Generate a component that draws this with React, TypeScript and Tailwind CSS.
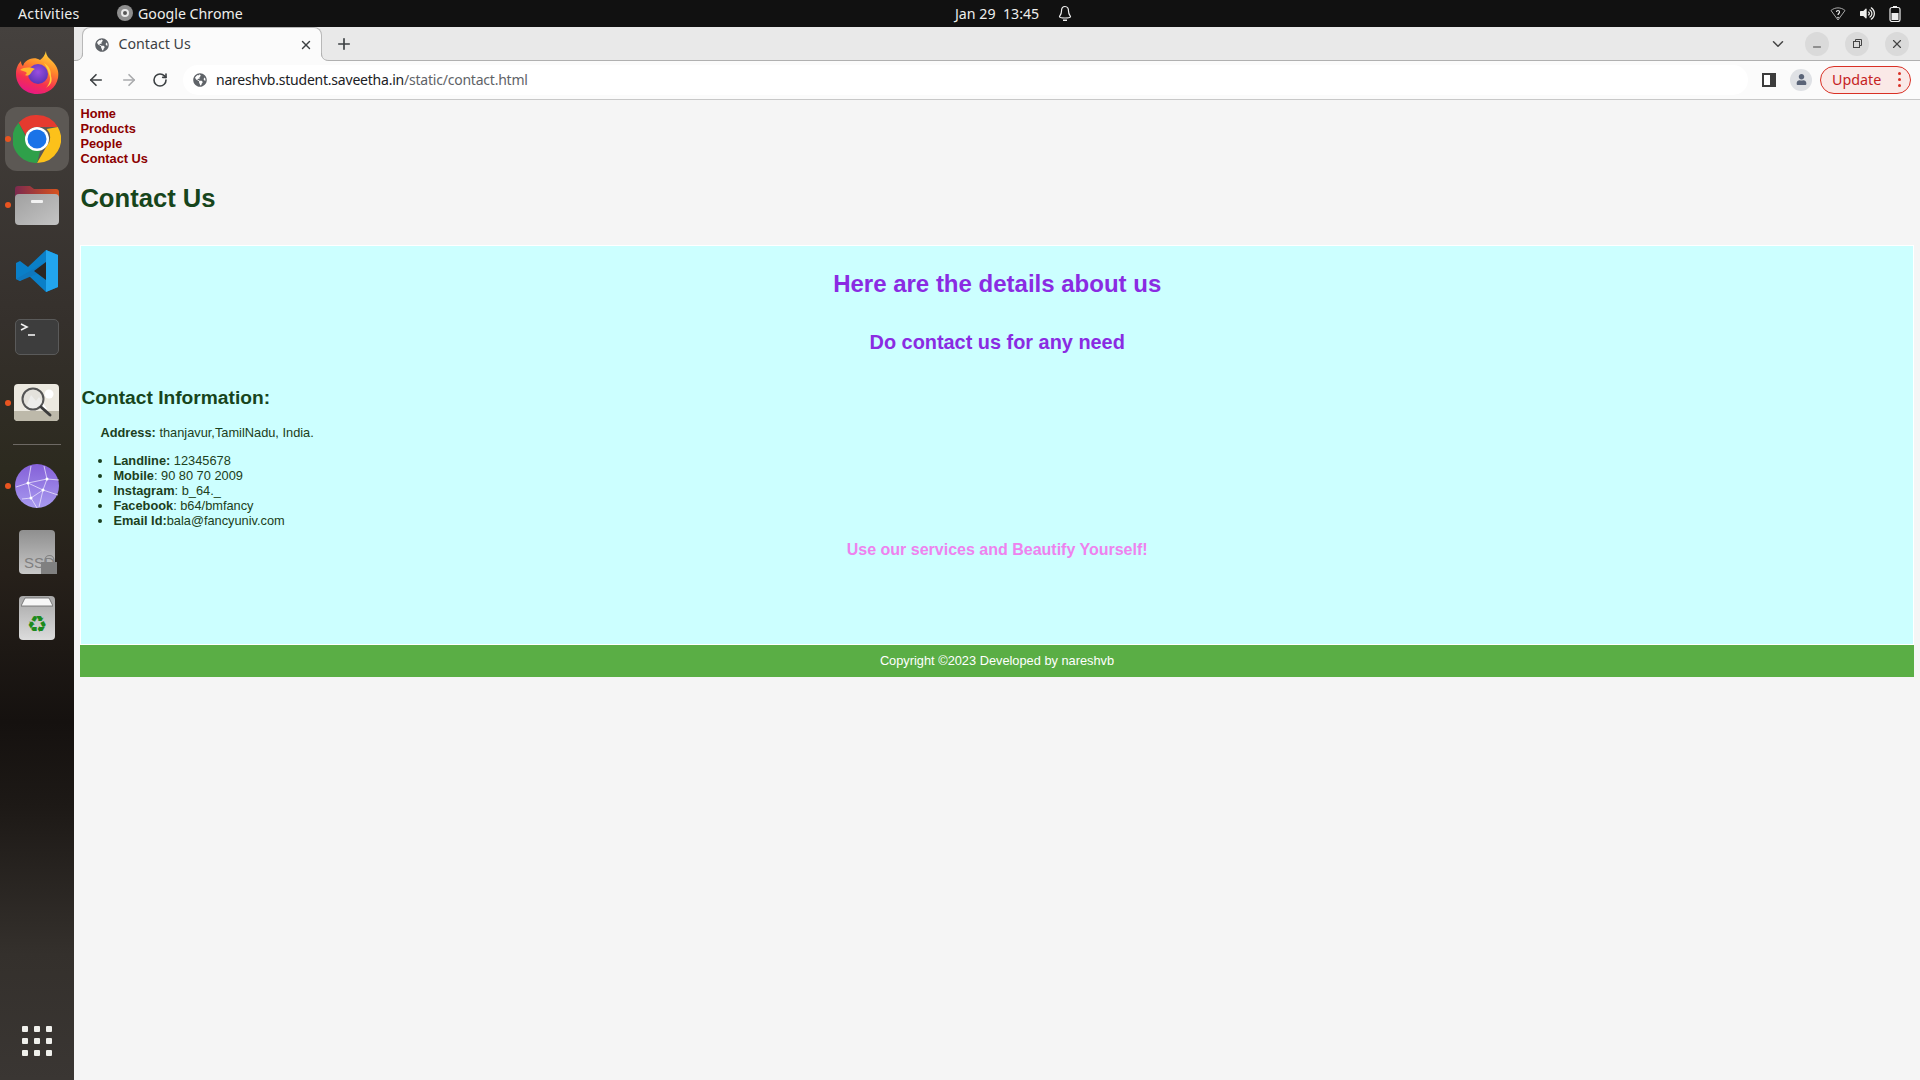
import { ArrowLeft, ArrowRight, ChevronDown, Minus, Plus, RotateCw, X } from "lucide-react";
import { FaGlobeAmericas, FaUser, FaVolumeUp } from "react-icons/fa";

const UI_FONT = "font-['Noto_Sans',sans-serif]";

function FirefoxIcon() {
  return (
    <svg width="44" height="44" viewBox="0 0 44 44">
      <defs>
        <linearGradient id="ffBody" x1="0.7" y1="0" x2="0.3" y2="1">
          <stop offset="0" stopColor="#ffd53a" />
          <stop offset="0.35" stopColor="#ff8a2a" />
          <stop offset="0.7" stopColor="#f5304f" />
          <stop offset="1" stopColor="#e6168a" />
        </linearGradient>
        <radialGradient id="ffGlobe" cx="0.5" cy="0.4" r="0.6">
          <stop offset="0" stopColor="#9a4ee0" />
          <stop offset="1" stopColor="#5b35b5" />
        </radialGradient>
      </defs>
      <path d="M31 0c0 5 3 7 7 11 5 5 6 11 5 16-2 10-10 16-21 16C10 43 1 34 1 23c0-6 2-10 5-13 0 3 1 4 2 5 1-4 4-6 7-7 3-1 7-1 10 1 3-2 5-5 6-9z" fill="url(#ffBody)" />
      <circle cx="23" cy="23" r="10" fill="url(#ffGlobe)" />
      <path d="M5 19c4-3 10-3 15-1-2 1-3 2-4 4-2 3-4 3-6 2 2-1 2-2 1-3-2-1-4-1-6-2z" fill="#ffb52e" />
      <path d="M29 12c5 3 7 7 7 13 2 6-1 9-5 12 4-5 5-9 3-14-1-4-3-8-5-11z" fill="#ffcf3a" />
    </svg>
  );
}

function ChromeIcon() {
  return (
    <svg width="48" height="48" viewBox="0 0 48 48">
      <path d="M24 0a24 24 0 0 1 20.800 12H24a12 12 0 0 0-11.300 8L5.600 7.800A24 24 0 0 1 24 0z" fill="#e53a2f" />
      <path d="M44.800 12A24 24 0 0 1 24 48l10.400-18A12 12 0 0 0 33.800 14z" fill="#fcc11a" />
      <path d="M24 48A24 24 0 0 1 5.600 7.800L14 24a11 11 0 0 0 14 9l-4 15z" fill="#2fa04a" />
      <circle cx="24" cy="24" r="12" fill="#fff" />
      <circle cx="24" cy="24" r="9.500" fill="#1a73e8" />
    </svg>
  );
}

function FolderIcon() {
  return (
    <svg width="44" height="40" viewBox="0 0 44 40">
      <defs>
        <linearGradient id="fdTop" x1="0" y1="0" x2="1" y2="0">
          <stop offset="0" stopColor="#7b2a4f" />
          <stop offset="1" stopColor="#d9531e" />
        </linearGradient>
        <linearGradient id="fdBody" x1="0" y1="0" x2="1" y2="1">
          <stop offset="0" stopColor="#a0a0a0" />
          <stop offset="1" stopColor="#c4c4c4" />
        </linearGradient>
      </defs>
      <path d="M0 4a3 3 0 0 1 3-3h12l4 3h22a3 3 0 0 1 3 3v9H0z" fill="url(#fdTop)" />
      <rect x="0" y="9" width="44" height="31" rx="4" fill="url(#fdBody)" />
      <rect x="16" y="15" width="12" height="3" rx="1" fill="#f2f2f2" />
    </svg>
  );
}

function VscodeIcon() {
  return (
    <svg width="44" height="44" viewBox="0 0 44 44">
      <path d="M31 1L13 18 5 12 1 14v16l4 2 8-6 18 17 12-5V6z" fill="#0a7fc8" />
      <path d="M31 1l12 5v32l-12 5z" fill="#22a5ee" />
      <path d="M1 30l30-17v8L5 32z" fill="#0f77bd" />
      <path d="M31 13v18L19 22z" fill="#2a2623" />
    </svg>
  );
}

function TerminalIcon() {
  return (
    <div className="relative h-9 w-11 rounded-[5px] border border-[#5a5a5a] bg-[#3d3d3d]">
      <svg width="44" height="36" viewBox="0 0 44 36" className="absolute -left-px -top-px">
        <path d="M6 5l6 3-6 3" fill="none" stroke="#f2f2f2" strokeWidth="1.600" />
        <path d="M13 16h7" stroke="#f2f2f2" strokeWidth="1.600" />
      </svg>
    </div>
  );
}

function SearchIcon() {
  return (
    <svg width="46" height="38" viewBox="0 0 46 38">
      <rect width="45" height="37" rx="4" fill="#ece9e0" />
      <path d="M0 27h45v6a4 4 0 0 1-4 4H4a4 4 0 0 1-4-4z" fill="#bdb9aa" />
      <path d="M11 25l6-14 5 6 3-4 8 12z" fill="#fff" />
      <circle cx="35" cy="10" r="4.500" fill="#fff" />
      <circle cx="19" cy="15" r="10.500" fill="#dcdcd8" fillOpacity="0.500" stroke="#555" strokeWidth="2" />
      <path d="M27 23l9 8" stroke="#3c3c3c" strokeWidth="3" strokeLinecap="round" />
    </svg>
  );
}

function NetworkGlobeIcon() {
  return (
    <svg width="44" height="44" viewBox="0 0 44 44">
      <defs>
        <linearGradient id="nwBg" x1="0" y1="0" x2="0" y2="1">
          <stop offset="0" stopColor="#8460d8" />
          <stop offset="1" stopColor="#a89af0" />
        </linearGradient>
      </defs>
      <circle cx="22" cy="22" r="22" fill="url(#nwBg)" />
      <g fill="none" stroke="#e8e2fb" strokeWidth="0.800">
        <path d="M1 23l12-4 19-4 12 1" />
        <path d="M13 19l15 7 15 5" />
        <path d="M28 26l-12 8-9 1" />
        <path d="M13 19l3 15 6 10" />
        <path d="M32 15l-4 11-4 17" />
        <path d="M13 19l3-17M32 15l-3-13" />
      </g>
      <g fill="#fff">
        <circle cx="13" cy="19" r="1.500" />
        <circle cx="32" cy="15" r="1.500" />
        <circle cx="28" cy="26" r="1.500" />
        <circle cx="16" cy="34" r="1.500" />
      </g>
    </svg>
  );
}

function SsdIcon() {
  return (
    <div className="relative h-11 w-9 rounded-[4px] bg-gradient-to-b from-[#8f8f8f] to-[#c8c8c8]">
      <span className="absolute left-[5px] top-[24px] font-['Liberation_Sans',sans-serif] text-[15px] leading-[18px] text-[#808080]">SSD</span>
      <svg width="16" height="20" viewBox="0 0 16 20" className="absolute -right-[2px] bottom-0">
        <path d="M4 9V6a4.500 4.500 0 0 1 9 0v3" fill="none" stroke="#808080" strokeWidth="1.200" />
        <rect x="0" y="8" width="16" height="12" fill="#808080" />
      </svg>
    </div>
  );
}

function TrashIcon() {
  return (
    <div className="relative flex h-11 w-9 items-end justify-center rounded-[4px] bg-gradient-to-b from-[#a8a8a8] to-[#dcdcdc]">
      <svg width="32" height="10" viewBox="0 0 32 10" className="absolute left-[2px] top-[1px]">
        <path d="M4 1h24l4 8H0z" fill="#f7f7f7" stroke="#666" strokeWidth="0.800" />
      </svg>
      <span className="mb-[3px] font-['DejaVu_Sans',sans-serif] text-[23px] leading-[26px] text-[#1c8a1c]">♻</span>
    </div>
  );
}

const dockItems = [
  { icon: <FirefoxIcon />, running: false },
  { icon: <ChromeIcon />, running: true, active: true },
  { icon: <FolderIcon />, running: true },
  { icon: <VscodeIcon />, running: false },
  { icon: <TerminalIcon />, running: false },
  { icon: <SearchIcon />, running: true },
];

const dockBottomItems = [
  { icon: <NetworkGlobeIcon />, running: true },
  { icon: <SsdIcon />, running: false },
  { icon: <TrashIcon />, running: false },
];

function DockSlot({ icon, running, active }: { icon: React.ReactNode; running?: boolean; active?: boolean }) {
  return (
    <div className="relative flex h-[66px] w-[74px] items-center justify-center">
      {active && <div className="absolute left-[5px] top-[1px] h-16 w-16 rounded-xl bg-[#5c5854]" />}
      {running && <div className="absolute left-[5px] top-[30px] size-[6px] rounded-full bg-[#e95420]" />}
      <div className="relative flex items-center justify-center">{icon}</div>
    </div>
  );
}

function Dock() {
  return (
    <aside className="flex h-full w-[74px] shrink-0 flex-col bg-[linear-gradient(180deg,#45413e_0%,#35302c_28%,#2c2a1f_42%,#26201a_52%,#15110f_66%,#1d1916_74%,#34302c_88%,#3a3633_100%)] pt-[13px]">
      {dockItems.map((item, i) => (
        <DockSlot key={i} {...item} />
      ))}
      <div className="flex h-[17px] items-center justify-center">
        <div className="h-px w-12 bg-[#6d6964]" />
      </div>
      {dockBottomItems.map((item, i) => (
        <DockSlot key={i} {...item} />
      ))}
      <div className="mt-auto mb-[24px] grid grid-cols-3 gap-[6px] self-center">
        {Array.from({ length: 9 }).map((_, i) => (
          <div key={i} className="size-[6px] rounded-[1px] bg-[#f0f0ec]" />
        ))}
      </div>
    </aside>
  );
}

function TopBar() {
  return (
    <header className={`flex h-[27px] shrink-0 items-center bg-[#111111] text-[14.2px] text-[#eeeeec] ${UI_FONT}`}>
      <span className="ml-[18px] w-[99px] tracking-[0.25px]">Activities</span>
      <div className="flex w-[340px] items-center">
        <div className="flex size-4 items-center justify-center rounded-full bg-[#8e8e8e]">
          <div className="size-[8px] rounded-full border-2 border-[#e8e8e8] bg-[#555]" />
        </div>
        <span className="ml-[5px]">Google Chrome</span>
      </div>
      <span className="ml-[498px] text-[14.2px] whitespace-pre">Jan 29  13:45</span>
      <svg width="14" height="17" viewBox="0 0 14 17" className="ml-[19px]">
        <path d="M7 1.500c-2.500 0-3.500 2-3.500 4.500 0 3-1 4-2 5.500 0 1 1 1.500 5.500 1.500s5.500-.5 5.500-1.500c-1-1.500-2-2.500-2-5.500 0-2.500-1-4.500-3.500-4.500z" fill="none" stroke="#eee" strokeWidth="1.200" />
        <rect x="5" y="14.500" width="4" height="1.500" fill="#eee" />
      </svg>
      <div className="ml-auto mr-[19px] flex items-center gap-[14px]">
        <svg width="16" height="14" viewBox="0 0 16 14">
          <path d="M1 3.500C5 0 11 0 15 3.500L8 13z" fill="none" stroke="#aaa" strokeWidth="1" />
          <path d="M6.500 5c0-2 3-2 3 0 0 1.500-1.500 1.500-1.500 3" fill="none" stroke="#eee" strokeWidth="1.200" />
          <circle cx="8" cy="10.500" r="0.800" fill="#eee" />
        </svg>
        <FaVolumeUp className="size-[15px] text-[#eeeeec]" />
        <svg width="12" height="16" viewBox="0 0 12 16">
          <rect x="4" y="0" width="4" height="2" fill="#eee" />
          <rect x="1" y="1.500" width="10" height="14" rx="2" fill="none" stroke="#eee" strokeWidth="1.200" />
          <rect x="2.500" y="7" width="7" height="7" fill="#eee" />
        </svg>
      </div>
    </header>
  );
}

function TabStrip() {
  return (
    <div className={`flex h-[34px] shrink-0 items-end border-b border-[#b0b0b0] bg-[#e9e9e9] ${UI_FONT}`}>
      <div className="relative ml-[8px] -mb-px flex h-[34px] w-[240px] items-center rounded-t-[8px] border border-b-0 border-[#b8b8b8] bg-[#fbfbfb] pl-[12px] pr-[8px]">
        <svg width="8" height="8" viewBox="0 0 8 8" className="absolute -left-[8px] bottom-0">
          <path d="M8 0C8 5 5 7.500 0 7.500V8h8z" fill="#fbfbfb" />
          <path d="M7.500 0C7.500 5 5 7.500 0 7.500" fill="none" stroke="#b0b0b0" />
        </svg>
        <svg width="8" height="8" viewBox="0 0 8 8" className="absolute -right-[8px] bottom-0">
          <path d="M0 0C0 5 3 7.500 8 7.500V8H0z" fill="#fbfbfb" />
          <path d="M.5 0C.5 5 3 7.500 8 7.500" fill="none" stroke="#b0b0b0" />
        </svg>
        <FaGlobeAmericas className="size-[14px] text-[#5f6368]" />
        <span className="ml-[9.500px] mb-[2px] text-[14.2px] text-[#3c4043]">Contact Us</span>
        <X className="ml-auto size-[14px] text-[#3c4043]" strokeWidth={2.5} />
      </div>
      <div className="ml-[13px] flex h-[33px] items-center">
        <Plus className="size-[18px] text-[#3c4043]" strokeWidth={2.2} />
      </div>
      <div className="ml-auto flex h-[33px] items-center pr-[11px]">
        <ChevronDown className="mr-[18px] size-[18px] text-[#444]" />
        <div className="flex size-6 items-center justify-center rounded-full bg-[#dadada]">
          <Minus className="mt-[6px] size-3 text-[#444]" />
        </div>
        <div className="ml-4 flex size-6 items-center justify-center rounded-full bg-[#dadada]">
          <svg width="9" height="9" viewBox="0 0 9 9">
            <rect x="0.500" y="2.500" width="6" height="6" fill="none" stroke="#444" />
            <path d="M2.500 2.500v-2h6v6h-2" fill="none" stroke="#444" />
          </svg>
        </div>
        <div className="ml-4 flex size-6 items-center justify-center rounded-full bg-[#dadada]">
          <X className="size-[14px] text-[#444]" />
        </div>
      </div>
    </div>
  );
}

function Toolbar() {
  return (
    <div className={`flex h-[39px] shrink-0 items-center border-b border-[#c8c8c8] bg-[#fbfbfb] pb-[1px] ${UI_FONT}`}>
      <ArrowLeft className="ml-[13px] size-[18px] text-[#3c4043]" strokeWidth={2.2} />
      <ArrowRight className="ml-[15px] size-[18px] text-[#a9abad]" strokeWidth={2.2} />
      <RotateCw className="ml-[14px] size-[16px] text-[#3c4043]" strokeWidth={2.4} />
      <div className="ml-[15px] flex h-[30px] w-[1565px] shrink-0 items-center rounded-full bg-white pl-[10px]">
        <FaGlobeAmericas className="size-[14px] text-[#5f6368]" />
        <span className="ml-[9px] text-[14px] tracking-[-0.22px] text-[#202124]">
          nareshvb.student.saveetha.in<span className="text-[#5f6368]">/static/contact.html</span>
        </span>
      </div>
      <div className="ml-[14px] h-[14px] w-[14px] shrink-0 border-2 border-r-[6px] border-[#3c3c3c] bg-white" />
      <div className="ml-[14px] flex size-[22px] shrink-0 items-center justify-center rounded-full bg-[#dfe1e5]">
        <FaUser className="size-[11px] text-[#5a6478]" />
      </div>
      <div className="ml-[8px] flex h-[28px] w-[91px] shrink-0 items-center rounded-full border border-[#d93025] bg-[#fae9e7] pl-[11px] text-[14.3px] text-[#c5221f]">
        Update
        <div className="ml-[17px] flex flex-col gap-[3px]">
          <div className="size-[3px] rounded-full bg-[#d93025]" />
          <div className="size-[3px] rounded-full bg-[#d93025]" />
          <div className="size-[3px] rounded-full bg-[#d93025]" />
        </div>
      </div>
    </div>
  );
}

const contacts = [
  { label: "Landline:", value: " 12345678" },
  { label: "Mobile", value: ": 90 80 70 2009" },
  { label: "Instagram", value: ": b_64._" },
  { label: "Facebook", value: ": b64/bmfancy" },
  { label: "Email Id:", value: "bala@fancyuniv.com" },
];

function Page() {
  return (
    <main className="min-h-0 flex-1 bg-[#f5f5f5] pr-[6px] pl-[6px] pt-[6px] font-['Liberation_Sans',Arial,sans-serif] text-[12.8px] leading-[15px] text-[#1c4020]">
      <nav className="flex flex-col pl-[0.4px] font-bold text-[#8b0000]">
        <a>Home</a>
        <a>Products</a>
        <a>People</a>
        <a>Contact Us</a>
      </nav>
      <h1 className="mt-[17px] pl-[0.4px] text-[25.6px] leading-[31px] font-bold text-[#17451c]">Contact Us</h1>

      <section className="mt-[31px] h-[400px] border border-white bg-[#ccffff] pl-[0.4px]">
        <h2 className="mt-[24px] text-center text-[24px] leading-[28px] font-bold text-[#8a2be2]">Here are the details about us</h2>
        <h3 className="mt-[33px] text-center text-[19.9px] leading-[23px] font-bold text-[#8a2be2]">Do contact us for any need</h3>
        <h4 className="mt-[33px] text-[19.2px] leading-[22px] font-bold text-[#17451c]">Contact Information:</h4>
        <p className="mt-[16px] pl-[19px]">
          <b>Address:</b> thanjavur,TamilNadu, India.
        </p>
        <ul className="mt-[13px] list-disc pl-[32px]">
          {contacts.map((c) => (
            <li key={c.label}>
              <b>{c.label}</b>
              {c.value}
            </li>
          ))}
        </ul>
        <p className="mt-[13px] text-center text-[16px] leading-[18px] font-bold text-[#ee82ee]">Use our services and Beautify Yourself!</p>
      </section>

      <footer className="flex h-[32px] items-center justify-center bg-[#5aae45] pb-[1px] text-white">Copyright ©2023 Developed by nareshvb</footer>
    </main>
  );
}

export default function App() {
  return (
    <div className="flex h-[1080px] w-[1920px] flex-col overflow-hidden">
      <TopBar />
      <div className="flex min-h-0 flex-1">
        <Dock />
        <div className="flex min-w-0 flex-1 flex-col">
          <TabStrip />
          <Toolbar />
          <Page />
        </div>
      </div>
    </div>
  );
}
